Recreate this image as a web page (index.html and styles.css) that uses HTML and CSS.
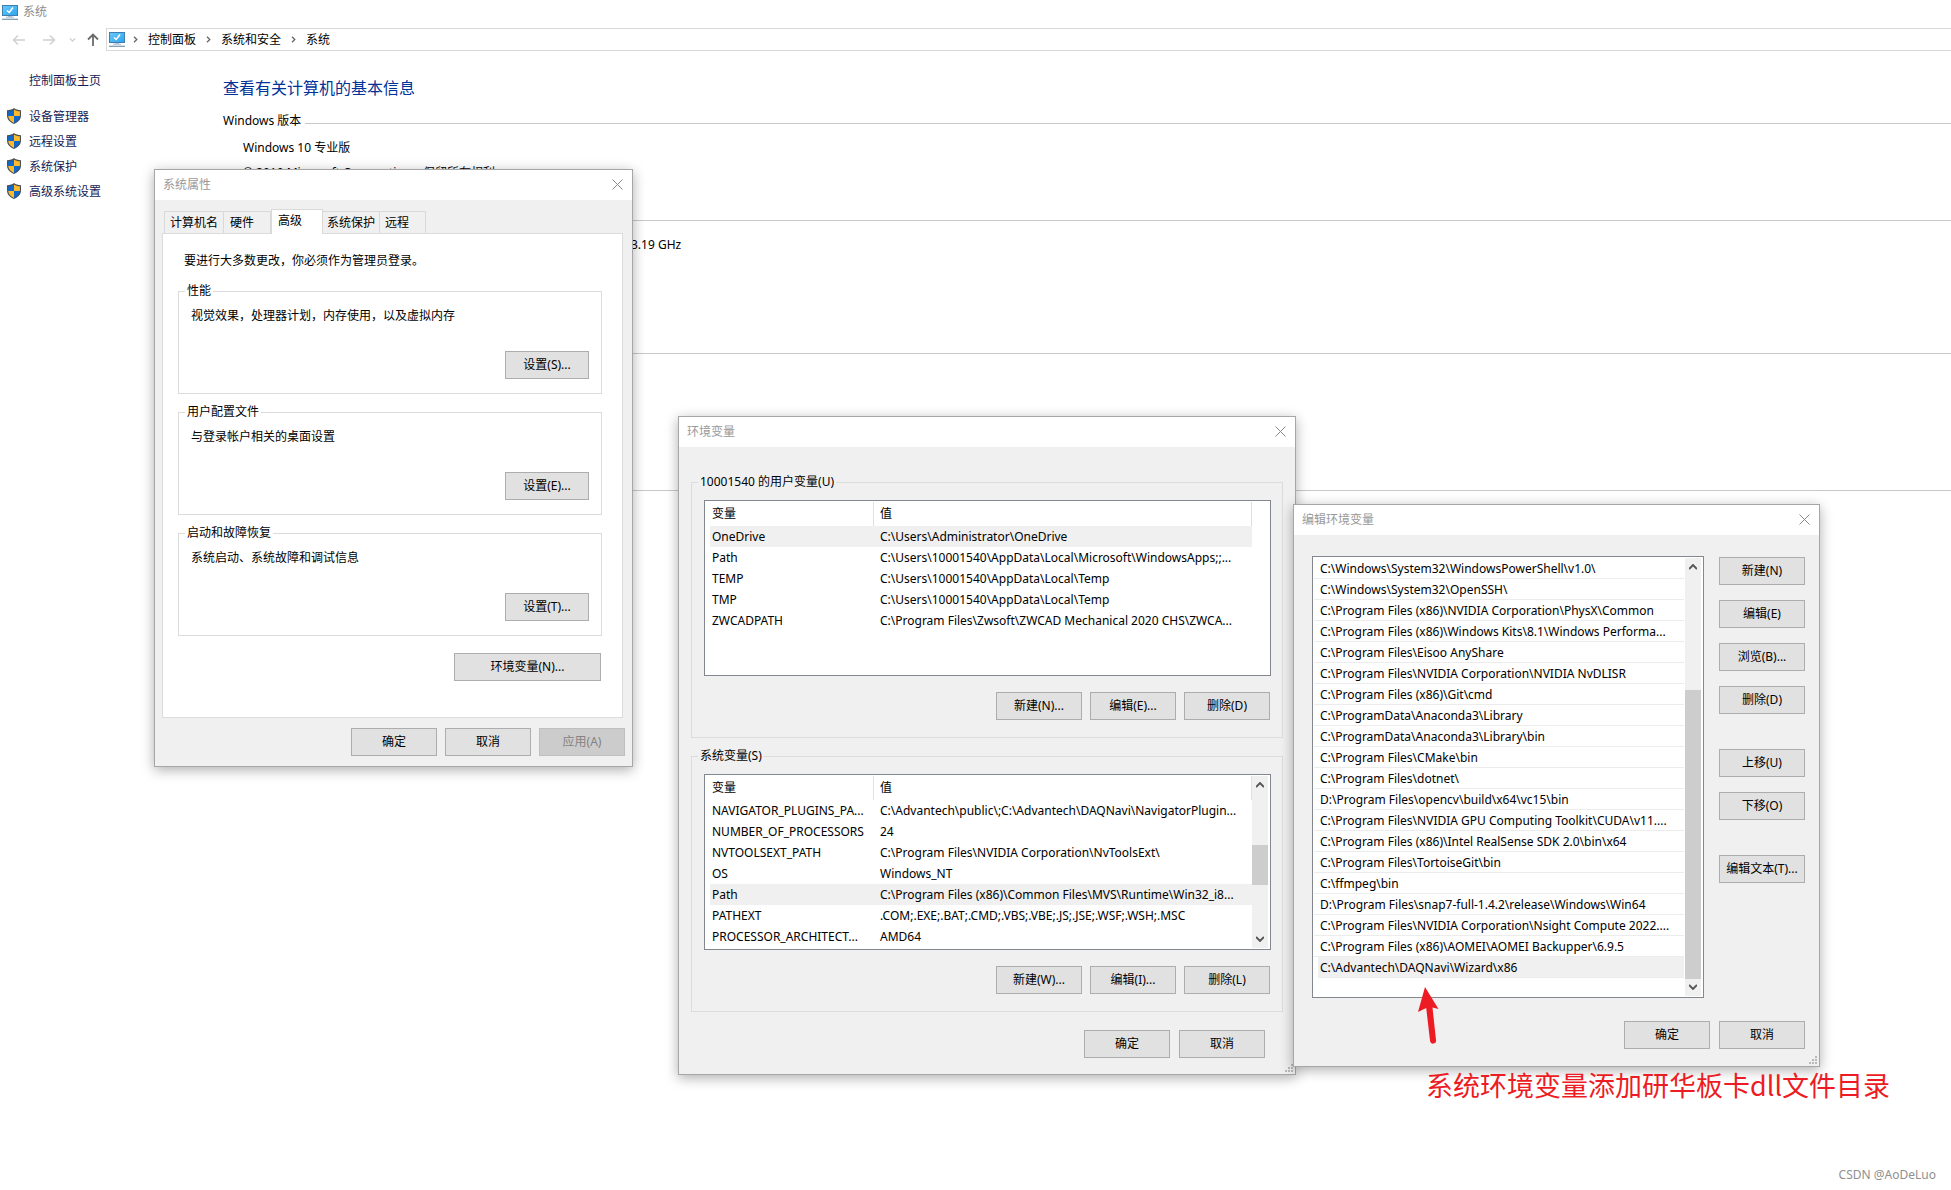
FILE: index.html
```html
<!DOCTYPE html>
<html lang="zh-CN">
<head>
<meta charset="utf-8">
<title>系统</title>
<link rel="stylesheet" href="styles.css">
</head>
<body>
<svg class="defs" aria-hidden="true">
  <defs>
    <linearGradient id="screen" x1="0" y1="0" x2="1" y2="1">
      <stop offset="0" stop-color="#6cc8fb"/><stop offset="1" stop-color="#2ba4ee"/>
    </linearGradient>
  </defs>
  <symbol id="pc" viewBox="0 0 16 15">
    <rect x="0.5" y="0.5" width="15" height="10" fill="url(#screen)" stroke="#3d80ad"/>
    <path d="M5 5.500 7.200 7.500 11 2.500" fill="none" stroke="#fff" stroke-width="1.500"/>
    <path d="M6 11h4v1H6z" fill="#b6c6d2"/>
    <path d="M0 14.300h16" stroke="#7f9db4" stroke-width="1.300"/>
    <path d="M4 12.200h8" stroke="#a9bccb"/>
  </symbol>
  <symbol id="shield" viewBox="0 0 14 16">
    <path d="M7 0C5.400 1.400 3 2.100 0 2.300v5C0 11.500 2.800 14.400 7 16c4.200-1.600 7-4.500 7-8.700v-5C11 2.100 8.600 1.400 7 0z" fill="#4a4f55"/>
    <path d="M7 1.400C5.500 2.500 3.400 3.100 1.100 3.300V8H7z" fill="#0f69cc"/>
    <path d="M7 1.400C8.500 2.500 10.600 3.100 12.900 3.300V8H7z" fill="#fdbb2c"/>
    <path d="M1.200 8C1.500 11.300 4 13.600 7 14.900V8z" fill="#fdbb2c"/>
    <path d="M12.800 8C12.500 11.300 10 13.600 7 14.900V8z" fill="#0f69cc"/>
  </symbol>
  <symbol id="close" viewBox="0 0 11 11"><path d="M.5.5l10 10M10.500.5l-10 10" stroke="#8a8a8a" fill="none"/></symbol>
  <symbol id="up" viewBox="0 0 8 6"><path d="M0 5.100l4-4 4 4" fill="none" stroke="#555" stroke-width="2"/></symbol>
  <symbol id="down" viewBox="0 0 8 6"><path d="M0 .9l4 4 4-4" fill="none" stroke="#555" stroke-width="2"/></symbol>
  <symbol id="crumb" viewBox="0 0 5 7"><path d="M1 .7 3.800 3.500 1 6.300" fill="none" stroke="#666" stroke-width="1.300"/></symbol>
  <symbol id="grip" viewBox="0 0 8 8"><path d="M6 0h2v2H6zM3 3h2v2H3zM6 3h2v2H6zM0 6h2v2H0zM3 6h2v2H3zM6 6h2v2H6z" fill="#b9b9b9"/></symbol>
</svg>

<header class="caption"><svg class="pc"><use href="#pc"/></svg><span>系统</span></header>

<nav class="navbar">
  <div class="history">
    <svg viewBox="0 0 100 16" width="100" height="16" fill="none">
      <path d="M13.500 8H25M18 3.500 13.500 8l4.500 4.500" stroke="#d0d0d0" stroke-width="1.500"/>
      <path d="M43 8h11.500M50 3.500 54.500 8 50 12.500" stroke="#d0d0d0" stroke-width="1.500"/>
      <path d="M70 6.500l2.500 2.500L75 6.500" stroke="#d0d0d0" stroke-width="1.300"/>
      <path d="M93 14V3M88 7.500 93 2.500l5 5" stroke="#6b6b6b" stroke-width="1.800"/>
    </svg>
  </div>
  <div class="address">
    <svg class="pc"><use href="#pc"/></svg>
    <svg class="crumb"><use href="#crumb"/></svg><a href="#">控制面板</a>
    <svg class="crumb"><use href="#crumb"/></svg><a href="#">系统和安全</a>
    <svg class="crumb"><use href="#crumb"/></svg><a href="#">系统</a>
  </div>
</nav>

<div class="page">
  <aside class="sidebar">
    <a class="home" href="#">控制面板主页</a>
    <a href="#"><svg class="shield"><use href="#shield"/></svg><span>设备管理器</span></a>
    <a href="#"><svg class="shield"><use href="#shield"/></svg><span>远程设置</span></a>
    <a href="#"><svg class="shield"><use href="#shield"/></svg><span>系统保护</span></a>
    <a href="#"><svg class="shield"><use href="#shield"/></svg><span>高级系统设置</span></a>
  </aside>
  <main class="content">
    <h1>查看有关计算机的基本信息</h1>
    <section class="edition">
      <h2>Windows 版本</h2>
      <p>Windows 10 专业版</p>
      <p>© 2019 Microsoft Corporation。保留所有权利。</p>
    </section>
    <section class="ruled machine"><p>3.19 GHz</p></section>
    <section class="ruled network"></section>
    <section class="ruled"></section>
  </main>
</div>

<section class="window props" aria-label="系统属性">
  <header class="titlebar"><span>系统属性</span><button class="x" aria-label="关闭"><svg><use href="#close"/></svg></button></header>
  <div class="tabs" role="tablist">
    <button role="tab">计算机名</button><button role="tab" class="t2">硬件</button><button role="tab" class="active" aria-selected="true">高级</button><button role="tab" class="t4">系统保护</button><button role="tab" class="t5">远程</button>
  </div>
  <div class="panel">
    <p class="note">要进行大多数更改，你必须作为管理员登录。</p>
    <fieldset><legend>性能</legend><p>视觉效果，处理器计划，内存使用，以及虚拟内存</p><button class="btn set">设置(S)...</button></fieldset>
    <fieldset><legend>用户配置文件</legend><p>与登录帐户相关的桌面设置</p><button class="btn set">设置(E)...</button></fieldset>
    <fieldset><legend>启动和故障恢复</legend><p>系统启动、系统故障和调试信息</p><button class="btn set">设置(T)...</button></fieldset>
    <button class="btn env-btn">环境变量(N)...</button>
  </div>
  <footer class="actions"><button class="btn">确定</button><button class="btn">取消</button><button class="btn" disabled>应用(A)</button></footer>
</section>

<section class="window vars" aria-label="环境变量">
  <header class="titlebar"><span>环境变量</span><button class="x" aria-label="关闭"><svg><use href="#close"/></svg></button></header>
  <div class="groups">
    <fieldset>
      <legend>10001540 的用户变量(U)</legend>
      <div class="list">
        <table>
          <thead><tr><th>变量</th><th>值</th></tr></thead>
          <tbody>
            <tr class="sel"><td>OneDrive</td><td>C:\Users\Administrator\OneDrive</td></tr>
            <tr><td>Path</td><td>C:\Users\10001540\AppData\Local\Microsoft\WindowsApps;;...</td></tr>
            <tr><td>TEMP</td><td>C:\Users\10001540\AppData\Local\Temp</td></tr>
            <tr><td>TMP</td><td>C:\Users\10001540\AppData\Local\Temp</td></tr>
            <tr><td>ZWCADPATH</td><td>C:\Program Files\Zwsoft\ZWCAD Mechanical 2020 CHS\ZWCA...</td></tr>
          </tbody>
        </table>
      </div>
      <div class="row"><button class="btn">新建(N)...</button><button class="btn">编辑(E)...</button><button class="btn">删除(D)</button></div>
    </fieldset>
    <fieldset>
      <legend>系统变量(S)</legend>
      <div class="list">
        <table>
          <thead><tr><th>变量</th><th>值</th></tr></thead>
          <tbody>
            <tr><td>NAVIGATOR_PLUGINS_PA...</td><td>C:\Advantech\public\;C:\Advantech\DAQNavi\NavigatorPlugin...</td></tr>
            <tr><td>NUMBER_OF_PROCESSORS</td><td>24</td></tr>
            <tr><td>NVTOOLSEXT_PATH</td><td>C:\Program Files\NVIDIA Corporation\NvToolsExt\</td></tr>
            <tr><td>OS</td><td>Windows_NT</td></tr>
            <tr class="sel"><td>Path</td><td>C:\Program Files (x86)\Common Files\MVS\Runtime\Win32_i8...</td></tr>
            <tr><td>PATHEXT</td><td>.COM;.EXE;.BAT;.CMD;.VBS;.VBE;.JS;.JSE;.WSF;.WSH;.MSC</td></tr>
            <tr><td>PROCESSOR_ARCHITECT...</td><td>AMD64</td></tr>
          </tbody>
        </table>
        <div class="scroll"><svg><use href="#up"/></svg><div class="thumb mid"></div><svg><use href="#down"/></svg></div>
      </div>
      <div class="row"><button class="btn">新建(W)...</button><button class="btn">编辑(I)...</button><button class="btn">删除(L)</button></div>
    </fieldset>
  </div>
  <footer class="actions"><button class="btn">确定</button><button class="btn">取消</button></footer>
  <svg class="grip"><use href="#grip"/></svg>
</section>

<section class="window edit" aria-label="编辑环境变量">
  <header class="titlebar"><span>编辑环境变量</span><button class="x" aria-label="关闭"><svg><use href="#close"/></svg></button></header>
  <div class="editor">
    <div class="list">
      <ul>
        <li>C:\Windows\System32\WindowsPowerShell\v1.0\</li>
        <li>C:\Windows\System32\OpenSSH\</li>
        <li>C:\Program Files (x86)\NVIDIA Corporation\PhysX\Common</li>
        <li>C:\Program Files (x86)\Windows Kits\8.1\Windows Performa...</li>
        <li>C:\Program Files\Eisoo AnyShare</li>
        <li>C:\Program Files\NVIDIA Corporation\NVIDIA NvDLISR</li>
        <li>C:\Program Files (x86)\Git\cmd</li>
        <li>C:\ProgramData\Anaconda3\Library</li>
        <li>C:\ProgramData\Anaconda3\Library\bin</li>
        <li>C:\Program Files\CMake\bin</li>
        <li>C:\Program Files\dotnet\</li>
        <li>D:\Program Files\opencv\build\x64\vc15\bin</li>
        <li>C:\Program Files\NVIDIA GPU Computing Toolkit\CUDA\v11....</li>
        <li>C:\Program Files (x86)\Intel RealSense SDK 2.0\bin\x64</li>
        <li>C:\Program Files\TortoiseGit\bin</li>
        <li>C:\ffmpeg\bin</li>
        <li>D:\Program Files\snap7-full-1.4.2\release\Windows\Win64</li>
        <li>C:\Program Files\NVIDIA Corporation\Nsight Compute 2022....</li>
        <li>C:\Program Files (x86)\AOMEI\AOMEI Backupper\6.9.5</li>
        <li class="sel">C:\Advantech\DAQNavi\Wizard\x86</li>
      </ul>
      <div class="scroll"><svg><use href="#up"/></svg><div class="thumb low"></div><svg><use href="#down"/></svg></div>
    </div>
    <div class="column">
      <button class="btn">新建(N)</button>
      <button class="btn">编辑(E)</button>
      <button class="btn">浏览(B)...</button>
      <button class="btn">删除(D)</button>
      <button class="btn apart">上移(U)</button>
      <button class="btn">下移(O)</button>
      <button class="btn apart">编辑文本(T)...</button>
    </div>
  </div>
  <footer class="actions"><button class="btn">确定</button><button class="btn">取消</button></footer>
  <svg class="grip"><use href="#grip"/></svg>
</section>

<svg class="arrow" viewBox="0 0 22 58"><path d="M8 0 21.500 22 15.500 20.500 19 53a2.900 2.900 0 0 1-5.900 1.200L9.200 21 1 25z" fill="#ed1c24"/></svg>
<p class="remark">系统环境变量添加研华板卡dll文件目录</p>
<p class="watermark">CSDN @AoDeLuo</p>
</body>
</html>
```
FILE: styles.css
```css
* { box-sizing: border-box; }
body {
  margin: 0;
  min-height: 100vh;
  position: relative;
  background: #fff;
  color: #000;
  font: 12px/16px "Noto Sans", "Noto Sans CJK SC", sans-serif;
}
p, h1, h2, ul { margin: 0; padding: 0; font-weight: 400; }
a { color: inherit; text-decoration: none; }
button { font: inherit; color: inherit; padding: 0; margin: 0; white-space: nowrap; }
.defs { position: absolute; width: 0; height: 0; }
.pc { width: 16px; height: 15px; flex: none; }

/* system page behind the dialogs */
.caption { display: flex; align-items: center; gap: 5px; height: 24px; padding-left: 2px; color: #8c8c8c; }
.navbar { display: flex; padding-top: 4px; }
.history { width: 106px; display: flex; align-items: center; }
.address {
  flex: 1; display: flex; align-items: center; height: 23px; padding-left: 2px;
  border: 1px solid #d9d9d9; border-right: 0;
}
.address .crumb { width: 5px; height: 7px; margin: 0 10px 0 10px; }
.address .pc + .crumb { margin-left: 8px; }
.page { display: flex; }
.sidebar { width: 223px; padding: 22px 0 0 7px; color: #151c55; }
.sidebar a { display: flex; align-items: flex-start; gap: 8px; height: 17px; margin-bottom: 8px; }
.sidebar span { padding-top: 1px; }
.sidebar .home { padding-left: 22px; margin-bottom: 18px; }
.shield { width: 14px; height: 16px; }
.content { flex: 1; padding-top: 25px; }
h1 { font-size: 16px; line-height: 24px; color: #003399; }
h2 { display: flex; align-items: center; gap: 4px; font-size: 12px; }
h2::after { content: ""; flex: 1; height: 1px; margin-top: 5px; background: #c8c8c8; }
.edition { padding-top: 13px; height: 120px; }
.edition p { padding: 11px 0 0 20px; }
.edition p + p { padding-top: 9px; }
.ruled { border-top: 1px solid #c8c8c8; }
.machine { height: 133px; padding: 16px 0 0 408px; }
.network { height: 137px; }

/* windows */
.window {
  position: absolute; background: #f0f0f0; border: 1px solid #a6a6a6;
  box-shadow: 0 3px 12px rgba(0, 0, 0, .32);
}
.props { left: 154px; top: 169px; width: 479px; }
.vars { left: 678px; top: 416px; width: 618px; }
.edit { left: 1293px; top: 504px; width: 527px; }
.titlebar {
  display: flex; align-items: center; justify-content: space-between;
  height: 30px; padding: 0 9px 0 8px; background: #fff; color: #999;
}
.x { border: 0; background: none; width: 11px; height: 11px; margin-bottom: 2px; }
.x svg { display: block; width: 11px; height: 11px; }
.btn { width: 86px; height: 28px; background: #e1e1e1; border: 1px solid #adadad; }
.btn:disabled { background: #ccc; border-color: #bfbfbf; color: #838383; }
.actions { display: flex; justify-content: flex-end; gap: 9px; }
.grip { position: absolute; right: 2px; bottom: 2px; width: 8px; height: 8px; }
fieldset { margin: 0 0 10px; border: 1px solid #dcdcdc; min-width: 0; }
legend { padding: 0 2px; line-height: 16px; }

.tabs { display: flex; align-items: flex-end; height: 33px; padding-left: 9px; }
.tabs button {
  height: 22px; width: 60px; padding-left: 5px; text-align: left;
  background: #f0f0f0; border: 1px solid #d9d9d9; border-bottom: 0;
}
.tabs .t2 { width: 47px; padding-left: 6px; border-left: 0; }
.tabs .active { position: relative; height: 25px; width: 52px; margin-bottom: -1px; padding: 0 0 3px 6px; background: #fff; }
.tabs .t4 { width: 57px; border-left: 0; padding-left: 4px; }
.tabs .t5 { width: 46px; border-left: 0; }
.panel {
  display: flex; flex-direction: column; margin: 0 9px 0 7px; padding: 19px 20px 36px 15px;
  background: #fff; border: 1px solid #dcdcdc;
}
.note { padding-left: 6px; margin-bottom: 14px; }
.panel fieldset { display: flex; flex-direction: column; padding: 9px 12px 14px 12px; }
.panel legend { margin-left: -6px; }
.set { width: 84px; margin-top: 27px; align-self: flex-end; }
.env-btn { width: 147px; margin: 7px 1px 0 0; align-self: flex-end; }
.props .actions { gap: 8px; padding: 10px 7px 10px 0; }

.groups { padding: 27px 12px 0; }
.groups fieldset { padding: 10px 11px 17px 12px; }
.groups legend { margin-left: -6px; }
.list { display: flex; justify-content: space-between; background: #fff; border: 1px solid #828790; }
.vars .list { height: 176px; padding: 1px 2px 1px 5px; }
table { width: 542px; table-layout: fixed; border-collapse: separate; border-spacing: 0; align-self: flex-start; }
th, td { padding: 0 0 0 6px; height: 21px; text-align: left; font-weight: 400; white-space: nowrap; }
th { height: 24px; border-right: 1px solid #e0e0e0; }
th:first-child, td:first-child { width: 164px; padding-left: 2px; }
.sel { background: #f0f0f0; }
.row { display: flex; justify-content: flex-end; gap: 8px; padding: 16px 1px 0 0; }
.vars .actions { padding: 8px 30px 16px 0; }

.scroll { display: flex; flex-direction: column; align-items: center; width: 16px; background: #f0f0f0; padding: 6px 0; }
.scroll svg { width: 8px; height: 6px; }
.thumb { width: 16px; background: #cdcdcd; }
.mid { height: 40px; margin: 57px 0 auto; }
.low { flex: 1; margin: 120px 0 5px; }

.editor { display: flex; gap: 15px; padding: 21px 14px 0 18px; }
.edit .list { flex: 1; height: 442px; padding: 1px 2px 1px 1px; }
ul { list-style: none; flex: 1; margin-right: 1px; }
li { height: 21px; padding: 1px 0 0 6px; line-height: 20px; border-bottom: 1px solid #ececec; white-space: nowrap; }
li.sel { margin-left: 4px; padding-left: 2px; }
.column { display: flex; flex-direction: column; gap: 15px; padding-top: 1px; }
.column .apart { margin-top: 20px; }
.edit .actions { padding: 23px 14px 17px 0; }

/* notes over the desktop */
.arrow { position: absolute; left: 1417px; top: 987px; width: 22px; height: 58px; }
.remark {
  position: absolute; left: 1426px; top: 1065px; color: #ed1c24;
  font: 27px/40px "Noto Sans CJK SC", sans-serif; white-space: nowrap;
}
.watermark { position: absolute; right: 15px; bottom: 7px; color: #8f8f8f; }
```
